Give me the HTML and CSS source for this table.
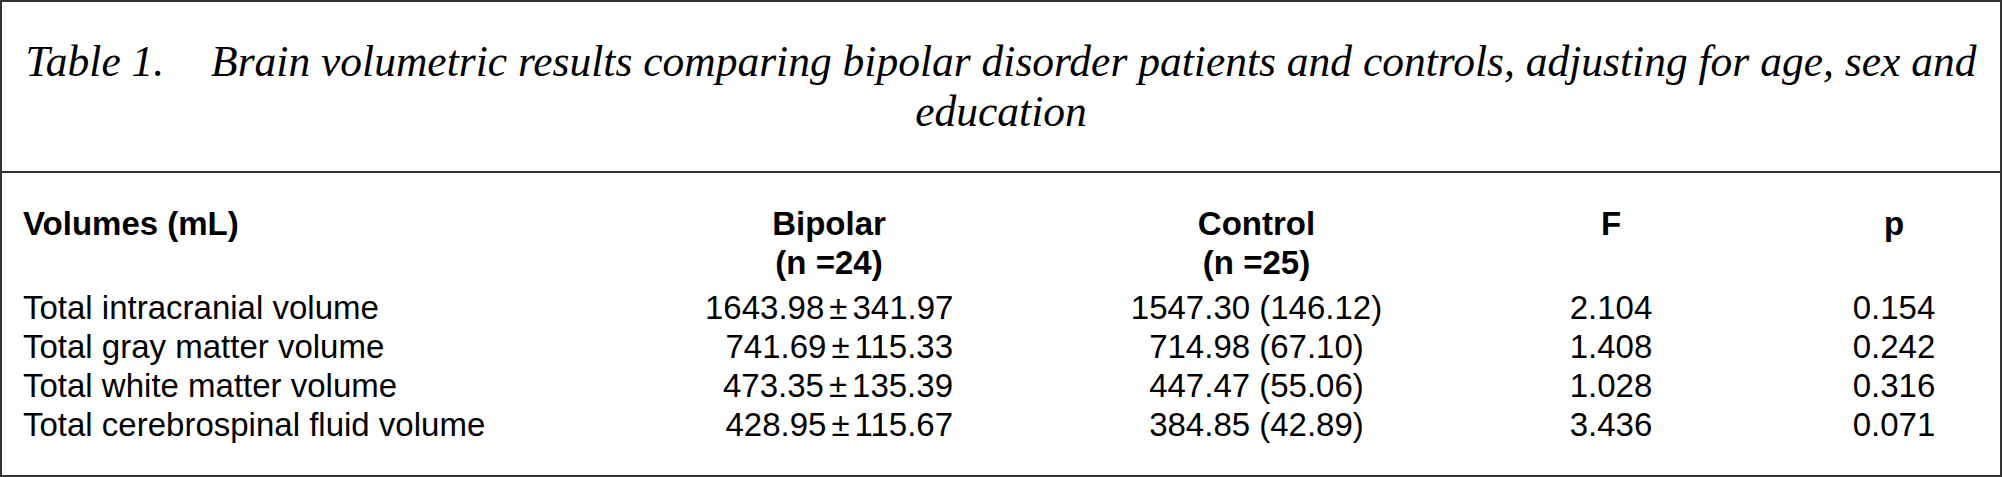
FILE: index.html
```html
<!DOCTYPE html>
<html lang="en">
<head>
<meta charset="utf-8">
<title>Table 1</title>
<link rel="stylesheet" href="styles.css">
</head>
<body>
<div class="frame">
  <div class="caption"><span class="caption-label">Table 1.</span> Brain volumetric results comparing bipolar disorder patients and controls, adjusting for age, sex and education</div>
  <div class="body">
    <div class="row head">
      <div class="cell label">Volumes (mL)</div>
      <div class="cell bipolar">Bipolar<br>(n =24)</div>
      <div class="cell center">Control<br>(n =25)</div>
      <div class="cell center">F</div>
      <div class="cell center">p</div>
    </div>
    <div class="row">
      <div class="cell label">Total intracranial volume</div>
      <div class="cell bipolar num">1643.98<span class="pm">±</span>341.97</div>
      <div class="cell center">1547.30 (146.12)</div>
      <div class="cell center">2.104</div>
      <div class="cell center">0.154</div>
    </div>
    <div class="row">
      <div class="cell label">Total gray matter volume</div>
      <div class="cell bipolar num">741.69<span class="pm">±</span>115.33</div>
      <div class="cell center">714.98 (67.10)</div>
      <div class="cell center">1.408</div>
      <div class="cell center">0.242</div>
    </div>
    <div class="row">
      <div class="cell label">Total white matter volume</div>
      <div class="cell bipolar num">473.35<span class="pm">±</span>135.39</div>
      <div class="cell center">447.47 (55.06)</div>
      <div class="cell center">1.028</div>
      <div class="cell center">0.316</div>
    </div>
    <div class="row">
      <div class="cell label">Total cerebrospinal fluid volume</div>
      <div class="cell bipolar num">428.95<span class="pm">±</span>115.67</div>
      <div class="cell center">384.85 (42.89)</div>
      <div class="cell center">3.436</div>
      <div class="cell center">0.071</div>
    </div>
  </div>
</div>
</body>
</html>
```

FILE: styles.css
```css
html, body {
  margin: 0;
  padding: 0;
  background: #ffffff;
}

.frame {
  box-sizing: border-box;
  width: 2002px;
  height: 477px;
  border: 2px solid #333333;
  color: #000000;
}

.caption {
  padding: 34px 0 35px;
  font-family: "Liberation Serif", "Times New Roman", serif;
  font-style: italic;
  font-size: 43.5px;
  line-height: 50px;
  text-align: center;
}

.caption-label {
  margin-right: 36px;
}

.body {
  border-top: 2px solid #333333;
  padding: 31px 0 31px 21px;
  font-family: "Liberation Sans", Arial, sans-serif;
  font-size: 33px;
  line-height: 39px;
}

.row {
  display: grid;
  grid-template-columns: 682px 374px 355px 354px 212px;
}

.row.head {
  font-weight: bold;
  margin-bottom: 6px;
}

.cell {
  white-space: nowrap;
}

.label {
  text-align: left;
}

.bipolar {
  padding-right: 126px;
  text-align: center;
}

.bipolar.num {
  text-align: right;
}

.center {
  text-align: center;
}

.pm {
  margin: 0 5px;
}
```
